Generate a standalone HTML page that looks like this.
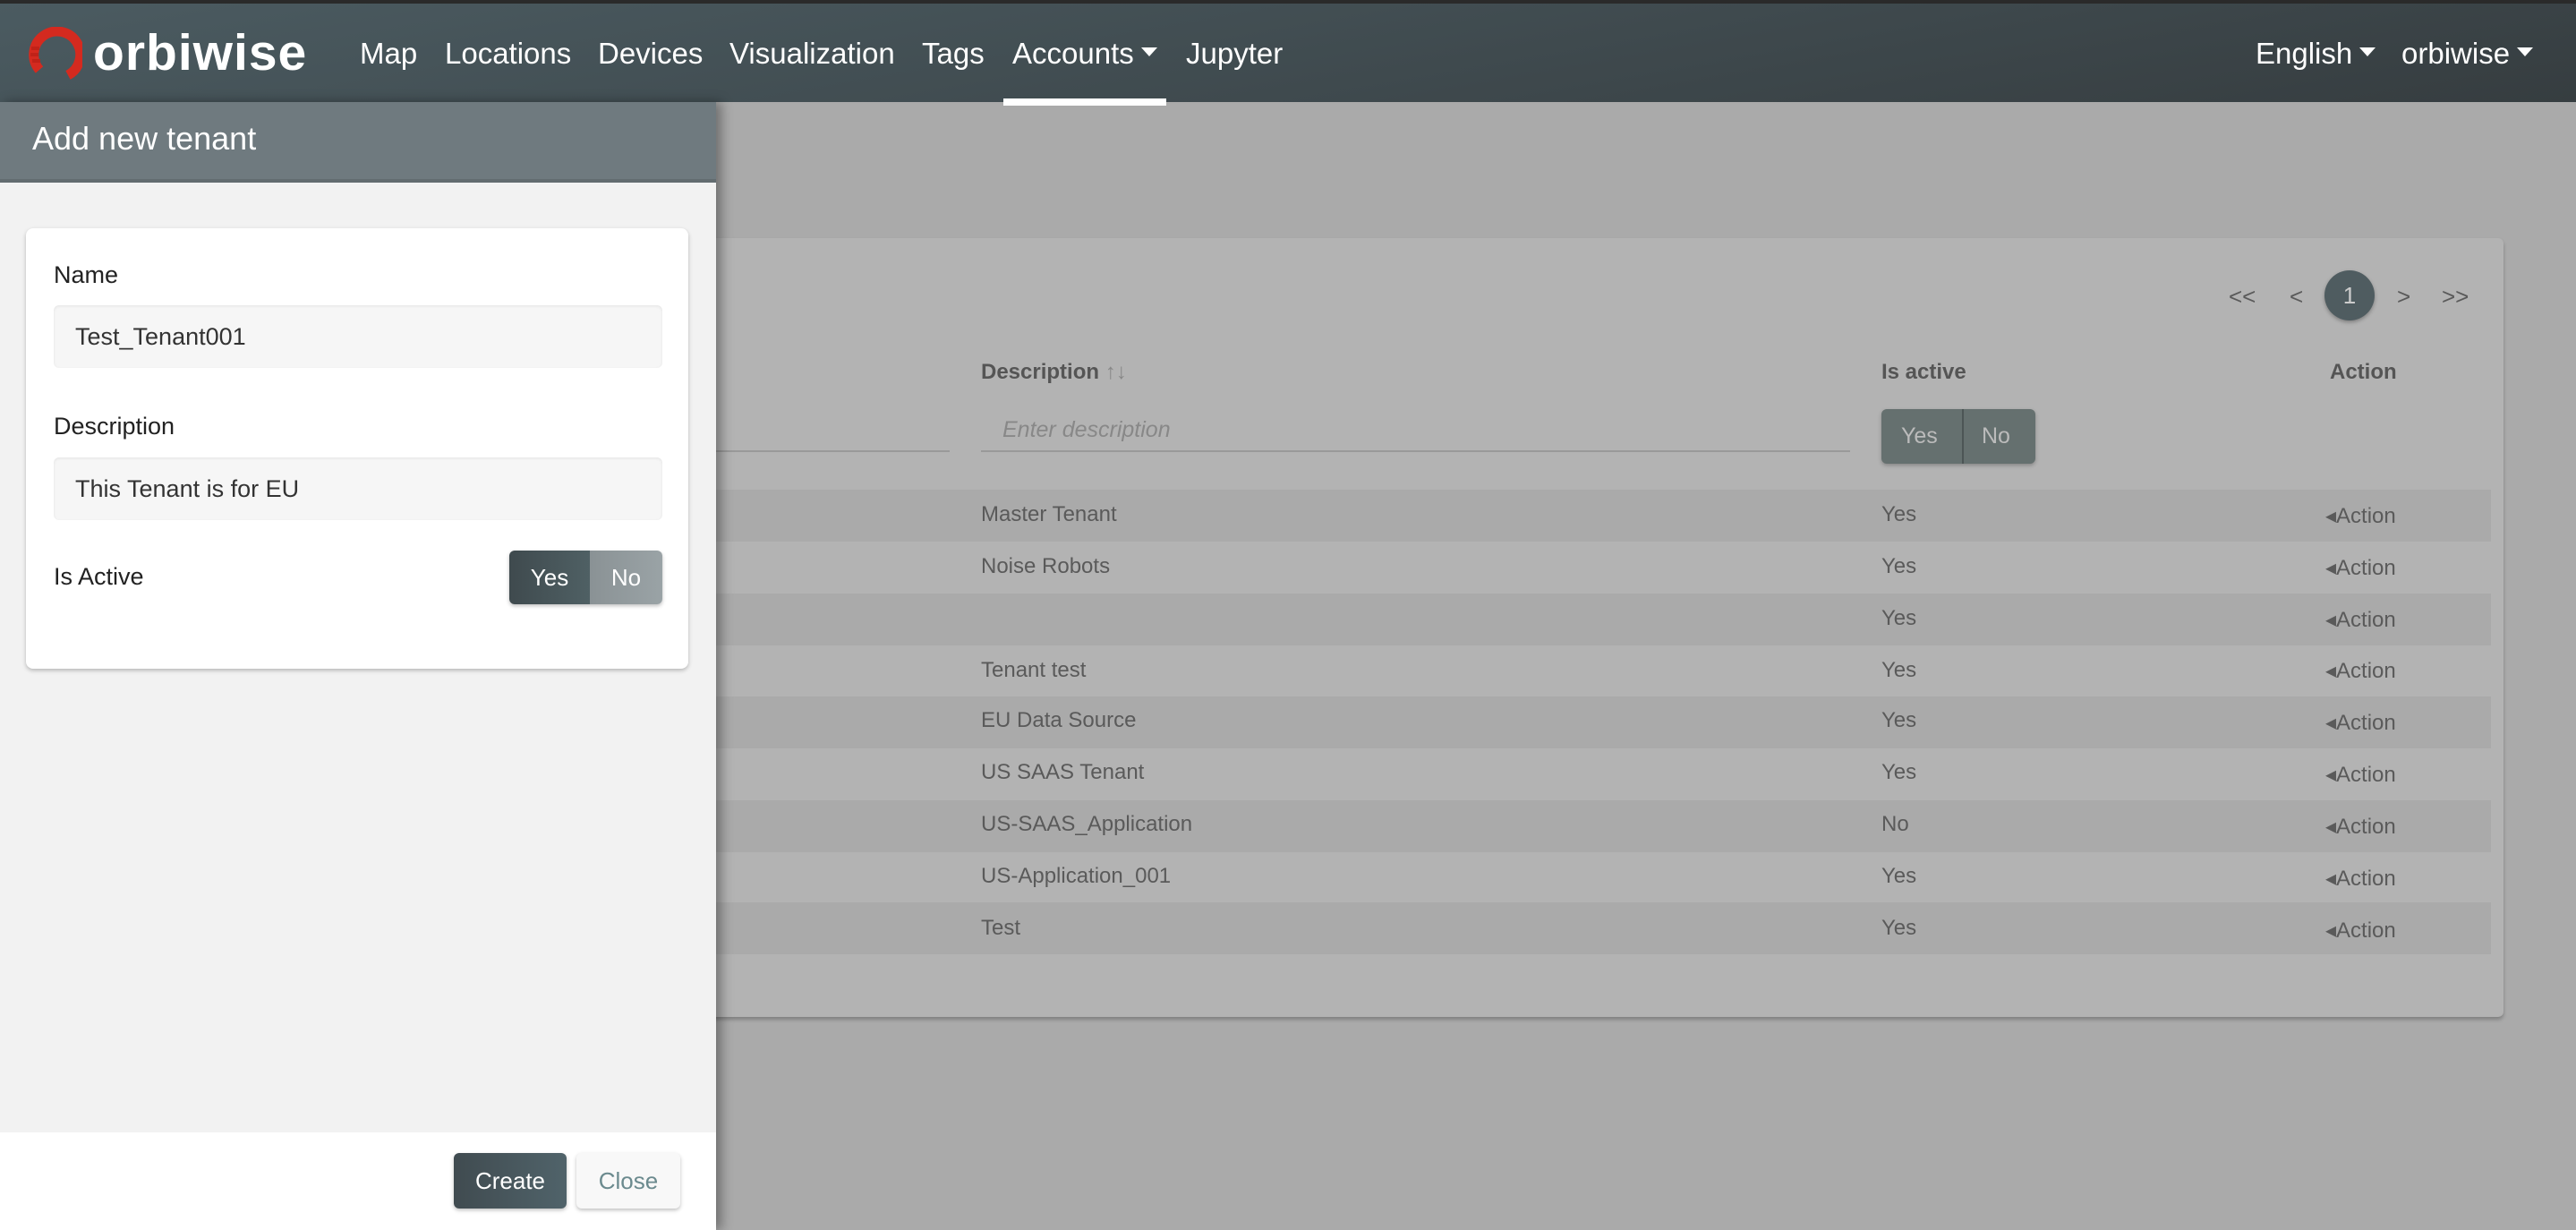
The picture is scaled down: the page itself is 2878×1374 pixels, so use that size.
<!DOCTYPE html>
<html><head><meta charset="utf-8"><style>
*{box-sizing:border-box;margin:0;padding:0}
body{width:2878px;height:1374px;overflow:hidden;font-family:"Liberation Sans",sans-serif;background:#aaaaaa;position:relative}
.nav{position:absolute;left:0;top:0;width:2878px;height:114px;background:linear-gradient(170deg,#4b5b61,#363d40);border-top:4px solid #2a2a2a}
.nav .it{position:absolute;top:36px;color:#fff;font-size:33px;line-height:40px}
.car{display:inline-block;width:0;height:0;border-left:9px solid transparent;border-right:9px solid transparent;border-top:10px solid #fff;vertical-align:middle;margin-left:8px;margin-top:-8px}
.ul{position:absolute;left:1121px;top:106px;width:182px;height:8px;background:#fff}
.logo{position:absolute;left:104px;top:22px;color:#fff;font-weight:bold;font-size:57px;letter-spacing:1px}
.main-card{position:absolute;left:760px;top:266px;width:2037px;height:870px;background:#b3b3b3;border-radius:6px;box-shadow:0 3px 4px rgba(0,0,0,.25)}
.t{position:absolute;color:#5a5a5a;font-size:24px;line-height:30px}
.th{position:absolute;color:#555;font-size:24px;font-weight:bold;top:402px}
.stripe{position:absolute;left:760px;width:2023px;height:58px;background:#aaaaaa}
.side{position:absolute;left:0;top:114px;width:800px;height:1260px;background:#f2f2f2;box-shadow:6px 0 12px rgba(0,0,0,.35)}
.sh{position:absolute;left:0;top:0;width:800px;height:90px;background:#6f7a7f;border-bottom:4px solid #636c70}
.sh span{position:absolute;left:36px;top:20px;color:#fff;font-size:36px}
.card{position:absolute;left:29px;top:141px;width:740px;height:492px;background:#fff;border-radius:8px;box-shadow:0 2px 5px rgba(0,0,0,.25)}
.lbl{position:absolute;left:31px;font-size:27px;color:#222}
.inp{position:absolute;left:31px;width:680px;height:70px;background:#f6f6f6;border-radius:6px;box-shadow:inset 0 1px 3px rgba(0,0,0,.08);font-size:27px;color:#333;padding:20px 0 0 24px}
.foot{position:absolute;left:0;top:1151px;width:800px;height:109px;background:#fff}
.btn{position:absolute;top:23px;height:62px;border-radius:6px;font-size:26px;text-align:center;line-height:62px;box-shadow:0 2px 4px rgba(0,0,0,.25)}
</style></head><body>
<div class="nav">
<svg style="position:absolute;left:30px;top:26px" width="62" height="62" viewBox="0 0 62 62"><path d="M14 48 A26 26 0 1 1 46 54" fill="none" stroke="#d42a1f" stroke-width="11"/><path d="M5 24h9M4 31h9M6 38h9" stroke="#c02218" stroke-width="4"/></svg>
<div class="logo">orbiwise</div>
<div class="it" style="left:402px">Map</div>
<div class="it" style="left:497px">Locations</div>
<div class="it" style="left:668px">Devices</div>
<div class="it" style="left:815px">Visualization</div>
<div class="it" style="left:1030px">Tags</div>
<div class="it" style="left:1131px">Accounts<span class="car"></span></div>
<div class="it" style="left:1325px">Jupyter</div>
<div class="it" style="left:2520px">English<span class="car"></span></div>
<div class="it" style="left:2683px">orbiwise<span class="car"></span></div>
<div class="ul"></div>
</div>

<div class="main-card"></div>
<div class="t" style="left:2490px;top:316px;font-size:26px">&lt;&lt;</div>
<div class="t" style="left:2558px;top:316px;font-size:26px">&lt;</div>
<div style="position:absolute;left:2597px;top:302px;width:56px;height:56px;border-radius:50%;background:#4f5c60;color:#ccc;font-size:26px;text-align:center;line-height:56px;box-shadow:0 2px 4px rgba(0,0,0,.3)">1</div>
<div class="t" style="left:2678px;top:316px;font-size:26px">&gt;</div>
<div class="t" style="left:2728px;top:316px;font-size:26px">&gt;&gt;</div>
<div class="th" style="left:1096px">Description <span style="color:#888;font-weight:normal">↑↓</span></div>
<div class="th" style="left:2102px">Is active</div>
<div class="th" style="left:2603px">Action</div>
<div style="position:absolute;left:800px;top:503px;width:261px;height:2px;background:#999"></div>
<div style="position:absolute;left:1096px;top:503px;width:971px;height:2px;background:#999"></div>
<div class="t" style="left:1120px;top:465px;font-style:italic;color:#888;font-size:25px">Enter description</div>
<div style="position:absolute;left:2102px;top:457px;width:172px;height:61px;border-radius:6px;background:#65706f;box-shadow:0 2px 4px rgba(0,0,0,.25);color:#bbb;font-size:25px;line-height:61px">
<span style="position:absolute;left:22px">Yes</span><span style="position:absolute;left:90px;top:0;width:2px;height:61px;background:#4c5555"></span><span style="position:absolute;left:112px">No</span></div>
<div class="stripe" style="top:547px"></div>
<div class="stripe" style="top:663px"></div>
<div class="stripe" style="top:778px"></div>
<div class="stripe" style="top:894px"></div>
<div class="stripe" style="top:1008px"></div>
<div class="t" style="left:1096px;top:560px">Master Tenant</div>
<div class="t" style="left:1096px;top:618px">Noise Robots</div>
<div class="t" style="left:1096px;top:734px">Tenant test</div>
<div class="t" style="left:1096px;top:790px">EU Data Source</div>
<div class="t" style="left:1096px;top:848px">US SAAS Tenant</div>
<div class="t" style="left:1096px;top:906px">US-SAAS_Application</div>
<div class="t" style="left:1096px;top:964px">US-Application_001</div>
<div class="t" style="left:1096px;top:1022px">Test</div>
<div class="t" style="left:2102px;top:560px">Yes</div>
<div class="t" style="left:2102px;top:618px">Yes</div>
<div class="t" style="left:2102px;top:676px">Yes</div>
<div class="t" style="left:2102px;top:734px">Yes</div>
<div class="t" style="left:2102px;top:790px">Yes</div>
<div class="t" style="left:2102px;top:848px">Yes</div>
<div class="t" style="left:2102px;top:906px">No</div>
<div class="t" style="left:2102px;top:964px">Yes</div>
<div class="t" style="left:2102px;top:1022px">Yes</div>
<div class="t" style="left:2598px;top:562px">◂Action</div>
<div class="t" style="left:2598px;top:620px">◂Action</div>
<div class="t" style="left:2598px;top:678px">◂Action</div>
<div class="t" style="left:2598px;top:735px">◂Action</div>
<div class="t" style="left:2598px;top:793px">◂Action</div>
<div class="t" style="left:2598px;top:851px">◂Action</div>
<div class="t" style="left:2598px;top:909px">◂Action</div>
<div class="t" style="left:2598px;top:967px">◂Action</div>
<div class="t" style="left:2598px;top:1025px">◂Action</div>

<div class="side">
<div class="sh"><span>Add new tenant</span></div>
<div class="card">
<div class="lbl" style="top:37px">Name</div>
<div class="inp" style="top:86px">Test_Tenant001</div>
<div class="lbl" style="top:206px">Description</div>
<div class="inp" style="top:256px">This Tenant is for EU</div>
<div class="lbl" style="top:374px">Is Active</div>
<div style="position:absolute;left:540px;top:360px;width:171px;height:60px;border-radius:6px;overflow:hidden;box-shadow:0 2px 4px rgba(0,0,0,.25);font-size:26px;color:#fff;line-height:60px">
<div style="position:absolute;left:0;top:0;width:90px;height:60px;background:linear-gradient(90deg,#3f4a4e,#4f6064);text-align:center">Yes</div>
<div style="position:absolute;left:90px;top:0;width:81px;height:60px;background:linear-gradient(90deg,#8a9295,#9aa3a6);text-align:center">No</div></div>
</div>
<div class="foot">
<div class="btn" style="left:507px;width:126px;background:linear-gradient(90deg,#404b50,#50636a);color:#fff">Create</div>
<div class="btn" style="left:644px;width:116px;background:#f8f8f8;color:#6b8a8e">Close</div>
</div>
</div>
</body></html>
